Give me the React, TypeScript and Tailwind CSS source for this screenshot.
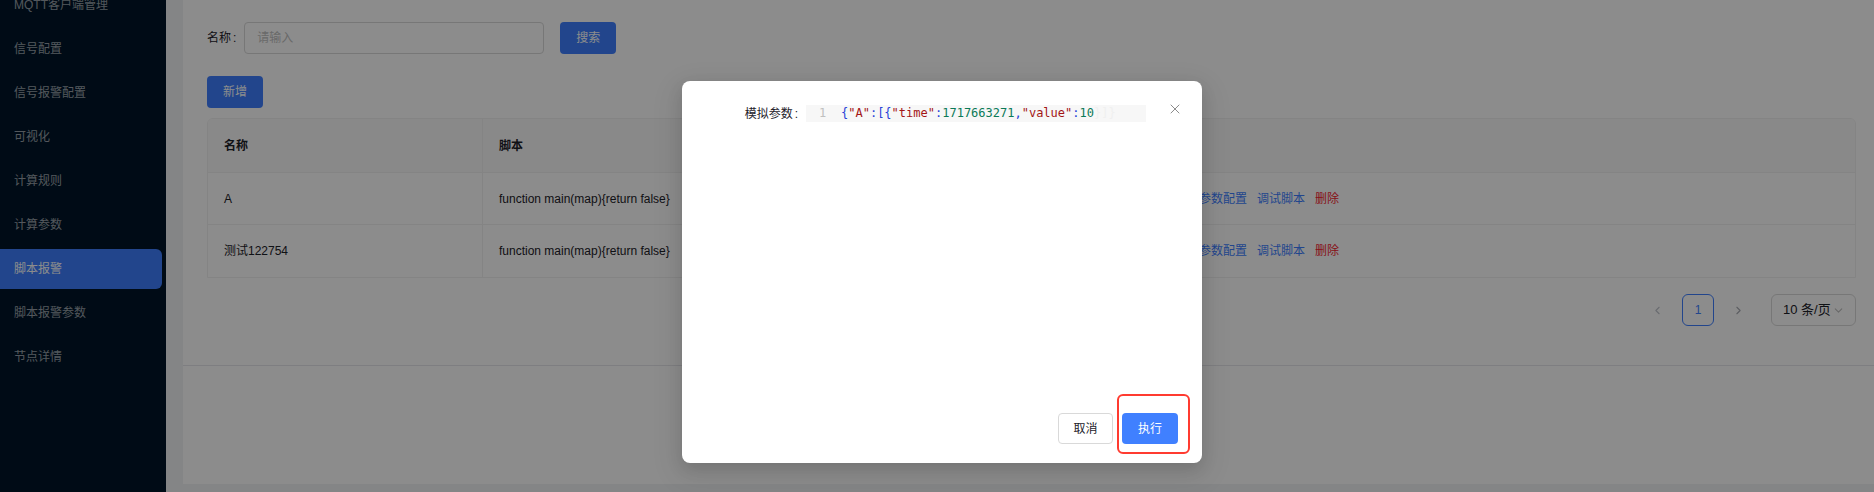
import { ChevronLeft, ChevronRight, ChevronDown, X } from "lucide-react"

const menu = [
  "MQTT客户端管理",
  "信号配置",
  "信号报警配置",
  "可视化",
  "计算规则",
  "计算参数",
  "脚本报警",
  "脚本报警参数",
  "节点详情",
]

const rows = [
  { name: "A", script: "function main(map){return false}" },
  { name: "测试122754", script: "function main(map){return false}" },
]

const font = { fontFamily: '"Liberation Sans", "Noto Sans CJK SC", sans-serif' }

export default function App() {
  return (
    <div className="relative flex h-[492px] w-[1874px] overflow-hidden text-[12px] text-[#1d2129]" style={font}>
      {/* Sidebar */}
      <aside className="w-[166px] shrink-0 bg-[#001529]">
        <ul className="-mt-[15px] flex flex-col gap-1 pr-[4px]">
          {menu.map((m) => (
            <li
              key={m}
              className={
                m === "脚本报警"
                  ? "flex h-[40px] items-center rounded-r-[6px] bg-[#3e7fff] pl-[14px] text-white"
                  : "flex h-[40px] items-center pl-[14px] text-white/60"
              }
            >
              {m}
            </li>
          ))}
        </ul>
      </aside>

      {/* Main */}
      <main className="flex flex-1 flex-col bg-[#f0f2f5] pl-[17px]">
        <section className="h-[366px] border-b border-[#e5e6eb] bg-white pl-[24px] pr-[18px] pt-[22px]">
          {/* Search */}
          <div className="flex items-center">
            <label className="flex items-center">
              名称<span className="ml-[2px]">:</span>
            </label>
            <input
              placeholder="请输入"
              className="ml-[8px] h-[32px] w-[300px] rounded-[4px] border border-[#d9d9d9] px-[12px] text-[12px] outline-none placeholder:text-[#bfbfbf]"
            />
            <button className="ml-[16px] h-[32px] w-[56px] rounded-[4px] bg-[#3e7fff] text-white">搜索</button>
          </div>

          <button className="mt-[22px] h-[32px] w-[56px] rounded-[4px] bg-[#3e7fff] text-white">新增</button>

          {/* Table */}
          <div className="mt-[10px] overflow-hidden rounded-t-[6px] border border-[#f0f0f0]">
            <div className="flex h-[54px] items-center border-b border-[#f0f0f0] bg-[#fafafa] font-semibold">
              <div className="flex h-full w-[275px] items-center border-r border-[#f0f0f0] pl-[16px]">名称</div>
              <div className="flex h-full w-[418px] items-center border-r border-[#f0f0f0] pl-[16px]">脚本</div>
              <div className="flex h-full w-[248px] items-center border-r border-[#f0f0f0] pl-[16px]">描述</div>
              <div className="flex h-full flex-1 items-center pl-[16px]">操作</div>
            </div>
            {rows.map((r, i) => (
              <div
                key={r.name}
                className={`flex h-[52px] items-center ${i === 0 ? "border-b border-[#f0f0f0]" : ""}`}
              >
                <div className="flex h-full w-[275px] items-center border-r border-[#f0f0f0] pl-[16px]">{r.name}</div>
                <div className="flex h-full w-[418px] items-center border-r border-[#f0f0f0] pl-[16px]">{r.script}</div>
                <div className="flex h-full w-[248px] items-center border-r border-[#f0f0f0] pl-[16px]"></div>
                <div className="flex h-full flex-1 items-center gap-[10px] pl-[16px]">
                  <span className="text-[#3e7fff]">编辑</span>
                  <span className="text-[#3e7fff]">参数配置</span>
                  <span className="text-[#3e7fff]">调试脚本</span>
                  <span className="text-[#f5222d]">删除</span>
                </div>
              </div>
            ))}
          </div>

          {/* Pagination */}
          <div className="mt-[16px] flex items-center justify-end">
            <ChevronLeft size={13} className="mr-[18px] text-[#c0c4cc]" />
            <div className="flex h-[32px] w-[32px] items-center justify-center rounded-[6px] border border-[#3e7fff] text-[#3e7fff]">
              1
            </div>
            <ChevronRight size={13} className="ml-[18px] text-[#a8abb2]" />
            <div className="ml-[26px] flex h-[32px] w-[85px] items-center justify-between rounded-[6px] border border-[#d9d9d9] pl-[11px] pr-[10px] text-[13px]">
              10 条/页
              <ChevronDown size={13} className="text-[#bfbfbf]" />
            </div>
          </div>
        </section>
        <section className="h-[118px] bg-white"></section>
      </main>

      {/* Mask */}
      <div className="absolute inset-0 bg-black/45"></div>

      {/* Modal */}
      <div className="absolute left-[682px] top-[81px] flex h-[382px] w-[520px] flex-col rounded-[8px] bg-white shadow-[0_6px_16px_rgba(0,0,0,0.12),0_9px_28px_8px_rgba(0,0,0,0.06)]">
        <button className="absolute right-[19px] top-[20px] text-[#8c8c8c]">
          <X size={16} strokeWidth={1.5} />
        </button>
        <div className="flex items-start pt-[24px]">
          <div className="flex h-[17px] w-[124px] items-center justify-end pr-[8px]">
            模拟参数<span className="ml-[2px]">:</span>
          </div>
          <div
            className="flex h-[17px] w-[340px] items-center bg-[#f7f7f7] text-[12px] leading-[17px]"
            style={{ fontFamily: '"DejaVu Sans Mono", monospace' }}
          >
            <span className="w-[35px] pl-[13px] text-[#c0c0c0]">1</span>
            <span className="whitespace-pre">
              <span className="text-[#2842d8]">{"{"}</span>
              <span className="text-[#a31515]">"A"</span>
              <span className="text-[#2842d8]">{":[{"}</span>
              <span className="text-[#a31515]">"time"</span>
              <span className="text-[#2842d8]">:</span>
              <span className="text-[#0b7a57]">1717663271</span>
              <span className="text-[#2842d8]">,</span>
              <span className="text-[#a31515]">"value"</span>
              <span className="text-[#2842d8]">:</span>
              <span className="text-[#0b7a57]">10</span>
              <span className="text-[#f0f0f0]">{"}]}"}</span>
            </span>
          </div>
        </div>
        <div className="mt-auto flex justify-end gap-[9px] pb-[19px] pr-[24px]">
          <button className="h-[31px] w-[55px] rounded-[4px] border border-[#d9d9d9] bg-white text-[#1d2129]">取消</button>
          <button className="h-[31px] w-[56px] rounded-[4px] bg-[#4080ff] text-white">执行</button>
        </div>
        {/* annotation */}
        <div className="pointer-events-none absolute left-[435px] top-[313px] h-[60px] w-[73px] rounded-[6px] border-2 border-[#ff3b30]"></div>
      </div>
    </div>
  )
}
